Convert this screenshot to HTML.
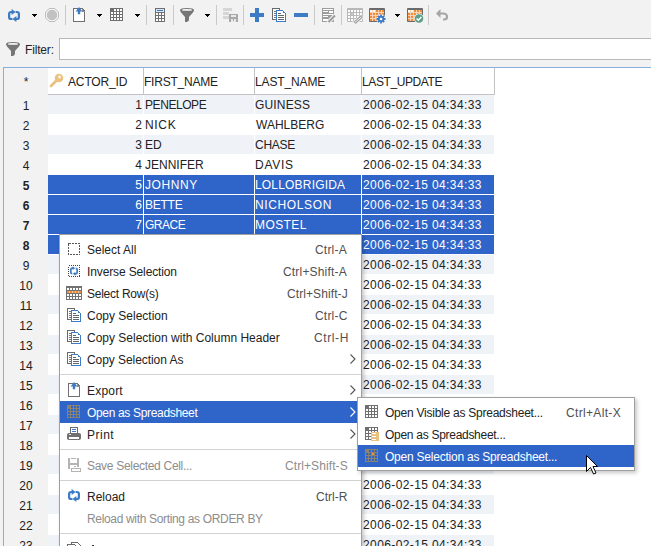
<!DOCTYPE html><html><head><meta charset="utf-8"><style>
*{margin:0;padding:0;box-sizing:border-box}
html,body{width:651px;height:546px;overflow:hidden}
body{position:relative;background:#f2f2f2;font-family:"Liberation Sans",sans-serif;font-size:12px;color:#222}
.a{position:absolute}
.t{position:absolute;white-space:nowrap}
.sep{position:absolute;top:5px;width:1px;height:20px;background:#c9c9c9}
.dd{position:absolute;top:14px;width:0;height:0;border-left:3px solid transparent;border-right:3px solid transparent;border-top:3px solid #000}
.ms{position:absolute;height:1px;background:#d2d2d2}
</style></head><body>
<div class="sep" style="left:65px"></div>
<div class="sep" style="left:146px"></div>
<div class="sep" style="left:173px"></div>
<div class="sep" style="left:216px"></div>
<div class="sep" style="left:243px"></div>
<div class="sep" style="left:314px"></div>
<div class="sep" style="left:341px"></div>
<div class="sep" style="left:428px"></div>
<svg class="a" style="left:32px;top:14px" width="5" height="3" viewBox="0 0 5 3" shape-rendering="crispEdges"><rect x="0" y="0" width="5" height="1" fill="#000"/><rect x="1" y="1" width="3" height="1" fill="#000"/><rect x="2" y="2" width="1" height="1" fill="#000"/></svg>
<svg class="a" style="left:97px;top:14px" width="5" height="3" viewBox="0 0 5 3" shape-rendering="crispEdges"><rect x="0" y="0" width="5" height="1" fill="#000"/><rect x="1" y="1" width="3" height="1" fill="#000"/><rect x="2" y="2" width="1" height="1" fill="#000"/></svg>
<svg class="a" style="left:135px;top:14px" width="5" height="3" viewBox="0 0 5 3" shape-rendering="crispEdges"><rect x="0" y="0" width="5" height="1" fill="#000"/><rect x="1" y="1" width="3" height="1" fill="#000"/><rect x="2" y="2" width="1" height="1" fill="#000"/></svg>
<svg class="a" style="left:205px;top:14px" width="5" height="3" viewBox="0 0 5 3" shape-rendering="crispEdges"><rect x="0" y="0" width="5" height="1" fill="#000"/><rect x="1" y="1" width="3" height="1" fill="#000"/><rect x="2" y="2" width="1" height="1" fill="#000"/></svg>
<svg class="a" style="left:395px;top:14px" width="5" height="3" viewBox="0 0 5 3" shape-rendering="crispEdges"><rect x="0" y="0" width="5" height="1" fill="#000"/><rect x="1" y="1" width="3" height="1" fill="#000"/><rect x="2" y="2" width="1" height="1" fill="#000"/></svg>
<svg class="a" style="left:8px;top:9px" width="12" height="13" viewBox="0 0 12 13" ><path d="M4.5 3 H3.2 Q1.1 3 1.1 5.1 V7.9 Q1.1 10 3.2 10 H4.4" fill="none" stroke="#3d7cc4" stroke-width="2.2"/><path d="M3.6 0 L7.6 3 L3.6 6 Z" fill="#3d7cc4"/><path d="M7.5 10 H8.8 Q10.9 10 10.9 7.9 V5.1 Q10.9 3 8.8 3 H7.6" fill="none" stroke="#3d7cc4" stroke-width="2.2"/><path d="M8.4 7 L4.4 10 L8.4 13 Z" fill="#3d7cc4"/></svg>
<svg class="a" style="left:45px;top:8px" width="14" height="14" viewBox="0 0 14 14" ><path d="M4.2 0.5 H9.8 L13.5 4.2 V9.8 L9.8 13.5 H4.2 L0.5 9.8 V4.2 Z" fill="none" stroke="#bcbcbc" stroke-width="1"/><path d="M4.9 2 H9.1 L12 4.9 V9.1 L9.1 12 H4.9 L2 9.1 V4.9 Z" fill="#c2c2c2"/></svg>
<svg class="a" style="left:73px;top:7px" width="12" height="15" viewBox="0 0 12 15" ><path d="M0.5 1.5 H9 L11.5 4 V14.5 H0.5 Z" fill="#fff" stroke="#707070" stroke-width="1" shape-rendering="crispEdges"/><path d="M9 1.5 V4 H11.5" fill="none" stroke="#909090" stroke-width="1" shape-rendering="crispEdges"/><path d="M2.6 4.6 L6 0 L9.4 4.6 H7.2 V7.2 H4.8 V4.6 Z" fill="#3d7cc4"/></svg>
<svg class="a" style="left:110px;top:8px" width="13" height="13" viewBox="0 0 13 13" shape-rendering="crispEdges"><rect x="0" y="0" width="13" height="13" fill="#6f6f6f"/><rect x="4" y="1" width="2" height="2" fill="#fff"/><rect x="7" y="1" width="2" height="2" fill="#fff"/><rect x="10" y="1" width="2" height="2" fill="#fff"/><rect x="1" y="4" width="2" height="2" fill="#fff"/><rect x="4" y="4" width="2" height="2" fill="#fff"/><rect x="7" y="4" width="2" height="2" fill="#fff"/><rect x="10" y="4" width="2" height="2" fill="#fff"/><rect x="1" y="7" width="2" height="2" fill="#fff"/><rect x="4" y="7" width="2" height="2" fill="#fff"/><rect x="7" y="7" width="2" height="2" fill="#fff"/><rect x="10" y="7" width="2" height="2" fill="#fff"/><rect x="1" y="10" width="2" height="2" fill="#fff"/><rect x="4" y="10" width="2" height="2" fill="#fff"/><rect x="7" y="10" width="2" height="2" fill="#fff"/><rect x="10" y="10" width="2" height="2" fill="#fff"/></svg>
<svg class="a" style="left:155px;top:8px" width="10" height="14" viewBox="0 0 10 14" shape-rendering="crispEdges"><rect x="0" y="0" width="10" height="14" rx="1" fill="#707070"/><rect x="1" y="1" width="8" height="3" fill="#d8e6f5"/><rect x="2" y="2" width="6" height="1" fill="#3d7cc4"/><rect x="1" y="5" width="2" height="2" fill="#fff"/><rect x="4" y="5" width="2" height="2" fill="#fff"/><rect x="7" y="5" width="2" height="2" fill="#fff"/><rect x="1" y="8" width="2" height="2" fill="#fff"/><rect x="4" y="8" width="2" height="2" fill="#fff"/><rect x="7" y="8" width="2" height="2" fill="#fff"/><rect x="1" y="11" width="2" height="2" fill="#fff"/><rect x="4" y="11" width="2" height="2" fill="#fff"/><rect x="7" y="11" width="2" height="2" fill="#fff"/></svg>
<svg class="a" style="left:180px;top:8px" width="14" height="14" viewBox="0 0 14 14" ><path d="M0 2.2 Q0 0 7 0 Q14 0 14 2.2 Q14 3.6 9 9 V11.5 Q9 13.6 6.5 14 H5 V9 Q0 3.6 0 2.2 Z" fill="#767676"/><ellipse cx="7" cy="1.9" rx="5" ry="0.9" fill="#fafafa"/></svg>
<svg class="a" style="left:223px;top:8px" width="15" height="14" viewBox="0 0 15 14" shape-rendering="crispEdges"><rect x="0" y="0" width="9" height="3" rx="1" fill="#d6d6d6"/><rect x="0" y="4" width="6" height="3" rx="1" fill="#d6d6d6"/><rect x="0" y="8" width="6" height="3" rx="1" fill="#d6d6d6"/><path d="M6 6 H15 V14 H6 Z" fill="#a9a9a9"/><rect x="8" y="7" width="5" height="2" fill="#e8e8e8"/><rect x="8" y="11" width="5" height="3" fill="#e8e8e8"/><rect x="10" y="11" width="1" height="2" fill="#a9a9a9"/></svg>
<svg class="a" style="left:250px;top:8px" width="14" height="14" viewBox="0 0 14 14" shape-rendering="crispEdges"><rect x="5" y="0" width="4" height="14" fill="#3d7cc4"/><rect x="0" y="5" width="14" height="4" fill="#3d7cc4"/></svg>
<svg class="a" style="left:272px;top:8px" width="15" height="14" viewBox="0 0 15 14" shape-rendering="crispEdges"><path d="M0.5 0.5 H7.5 V11.5 H0.5 Z" fill="#fff" stroke="#6a6a6a" stroke-width="1"/><rect x="2" y="3" width="2" height="1" fill="#777"/><rect x="2" y="5" width="2" height="1" fill="#777"/><rect x="2" y="7" width="2" height="1" fill="#777"/><rect x="2" y="9" width="2" height="1" fill="#777"/><path d="M4.5 2.5 H10.5 L13.5 5.5 V13.5 H4.5 Z" fill="#fff" stroke="#3d7cc4" stroke-width="1"/><rect x="11" y="3" width="1" height="2" fill="#3d7cc4"/><rect x="6" y="5" width="3" height="1" fill="#666"/><rect x="6" y="7" width="6" height="1" fill="#666"/><rect x="6" y="9" width="6" height="1" fill="#666"/><rect x="6" y="11" width="6" height="1" fill="#666"/></svg>
<svg class="a" style="left:294px;top:13px" width="14" height="4" viewBox="0 0 14 4" shape-rendering="crispEdges"><rect x="0" y="0" width="14" height="4" fill="#3d7cc4"/></svg>
<svg class="a" style="left:322px;top:8px" width="15" height="15" viewBox="0 0 15 15" ><rect x="0" y="0" width="12" height="14" fill="#9c9c9c"/><rect x="1" y="1" width="10" height="1" fill="#fff"/><rect x="1" y="3" width="5" height="1" fill="#fff"/><rect x="7" y="3" width="4" height="2" fill="#fff"/><rect x="1" y="6" width="10" height="1" fill="#fff"/><rect x="1" y="8" width="5" height="1" fill="#fff"/><rect x="1" y="11" width="5" height="2" fill="#fff"/><path d="M6 14.5 L13 7.5" stroke="#f2f2f2" stroke-width="4"/><path d="M6.5 14 L13 7.5" stroke="#9c9c9c" stroke-width="2"/></svg>
<svg class="a" style="left:347px;top:8px" width="17" height="16" viewBox="0 0 17 16" ><rect x="0" y="0" width="16" height="14" rx="1" fill="#b8b8b8"/><rect x="1" y="2" width="14" height="11" fill="#b8b8b8"/><rect x="1" y="2" width="2" height="2" fill="#fff"/><rect x="4" y="2" width="2" height="2" fill="#fff"/><rect x="7" y="2" width="2" height="2" fill="#fff"/><rect x="10" y="2" width="2" height="2" fill="#fff"/><rect x="13" y="2" width="2" height="2" fill="#fff"/><rect x="1" y="5" width="2" height="2" fill="#fff"/><rect x="4" y="5" width="2" height="2" fill="#fff"/><rect x="7" y="5" width="2" height="2" fill="#fff"/><rect x="10" y="5" width="2" height="2" fill="#fff"/><rect x="13" y="5" width="2" height="2" fill="#fff"/><rect x="1" y="8" width="2" height="2" fill="#fff"/><rect x="4" y="8" width="2" height="2" fill="#fff"/><rect x="7" y="8" width="2" height="2" fill="#fff"/><rect x="10" y="8" width="2" height="2" fill="#fff"/><rect x="13" y="8" width="2" height="2" fill="#fff"/><rect x="1" y="11" width="2" height="2" fill="#fff"/><rect x="4" y="11" width="2" height="2" fill="#fff"/><rect x="7" y="11" width="2" height="2" fill="#fff"/><rect x="10" y="11" width="2" height="2" fill="#fff"/><rect x="13" y="11" width="2" height="2" fill="#fff"/><rect x="4" y="5" width="2" height="2" fill="#c8c8c8"/><path d="M7 15.5 L15.5 8" stroke="#f2f2f2" stroke-width="4.5"/><path d="M7.6 14.8 L15 8.2" stroke="#a0a0a0" stroke-width="3"/><path d="M8.2 14.2 L14.4 8.8" stroke="#f4f4f4" stroke-width="1"/></svg>
<svg class="a" style="left:369px;top:8px" width="17" height="16" viewBox="0 0 17 16" ><rect x="0" y="0" width="16" height="14" rx="1" fill="#6a6a6a"/><rect x="1" y="2" width="14" height="11" fill="#f6d3b5"/><rect x="1" y="2" width="2" height="2" fill="#fff"/><rect x="4" y="2" width="2" height="2" fill="#fff"/><rect x="7" y="2" width="2" height="2" fill="#f08c3a"/><rect x="10" y="2" width="2" height="2" fill="#f08c3a"/><rect x="13" y="2" width="2" height="2" fill="#f08c3a"/><rect x="1" y="5" width="2" height="2" fill="#f08c3a"/><rect x="4" y="5" width="2" height="2" fill="#f08c3a"/><rect x="7" y="5" width="2" height="2" fill="#f08c3a"/><rect x="10" y="5" width="2" height="2" fill="#f08c3a"/><rect x="13" y="5" width="2" height="2" fill="#f08c3a"/><rect x="1" y="8" width="2" height="2" fill="#f08c3a"/><rect x="4" y="8" width="2" height="2" fill="#f08c3a"/><rect x="7" y="8" width="2" height="2" fill="#f08c3a"/><rect x="10" y="8" width="2" height="2" fill="#f08c3a"/><rect x="13" y="8" width="2" height="2" fill="#f08c3a"/><rect x="1" y="11" width="2" height="2" fill="#f08c3a"/><rect x="4" y="11" width="2" height="2" fill="#f08c3a"/><rect x="7" y="11" width="2" height="2" fill="#f08c3a"/><rect x="10" y="11" width="2" height="2" fill="#f08c3a"/><rect x="13" y="11" width="2" height="2" fill="#f08c3a"/><circle cx="12" cy="11" r="4.8" fill="#f2f2f2"/><path d="M12 6.5 V15.5 M7.5 11 H16.5 M8.8 7.8 L15.2 14.2 M15.2 7.8 L8.8 14.2" stroke="#3d7cc4" stroke-width="1.8"/><circle cx="12" cy="11" r="3.2" fill="#3d7cc4"/><circle cx="12" cy="11" r="1.3" fill="#fff"/></svg>
<svg class="a" style="left:407px;top:8px" width="17" height="16" viewBox="0 0 17 16" ><rect x="0" y="0" width="16" height="14" rx="1" fill="#6a6a6a"/><rect x="1" y="2" width="14" height="11" fill="#f6d3b5"/><rect x="1" y="2" width="2" height="2" fill="#fff"/><rect x="4" y="2" width="2" height="2" fill="#fff"/><rect x="7" y="2" width="2" height="2" fill="#f08c3a"/><rect x="10" y="2" width="2" height="2" fill="#f08c3a"/><rect x="13" y="2" width="2" height="2" fill="#f08c3a"/><rect x="1" y="5" width="2" height="2" fill="#f08c3a"/><rect x="4" y="5" width="2" height="2" fill="#f08c3a"/><rect x="7" y="5" width="2" height="2" fill="#f08c3a"/><rect x="10" y="5" width="2" height="2" fill="#f08c3a"/><rect x="13" y="5" width="2" height="2" fill="#f08c3a"/><rect x="1" y="8" width="2" height="2" fill="#f08c3a"/><rect x="4" y="8" width="2" height="2" fill="#f08c3a"/><rect x="7" y="8" width="2" height="2" fill="#f08c3a"/><rect x="10" y="8" width="2" height="2" fill="#f08c3a"/><rect x="13" y="8" width="2" height="2" fill="#f08c3a"/><rect x="1" y="11" width="2" height="2" fill="#f08c3a"/><rect x="4" y="11" width="2" height="2" fill="#f08c3a"/><rect x="7" y="11" width="2" height="2" fill="#f08c3a"/><rect x="10" y="11" width="2" height="2" fill="#f08c3a"/><rect x="13" y="11" width="2" height="2" fill="#f08c3a"/><circle cx="12" cy="10.5" r="5" fill="#f2f2f2"/><circle cx="12" cy="10.5" r="4.3" fill="#5d9f86"/><path d="M9.6 10.5 L11.3 12.2 L14.4 9" fill="none" stroke="#fff" stroke-width="1.5"/></svg>
<svg class="a" style="left:436px;top:9px" width="13" height="12" viewBox="0 0 13 12" ><path d="M2 4.5 H7 Q11 4.5 11 8 Q11 10.5 8 10.5 H7" fill="none" stroke="#a6a6a6" stroke-width="2.2"/><path d="M0 4.5 L4.5 0 V9 Z" fill="#a6a6a6"/></svg>
<svg class="a" style="left:6px;top:42px" width="14" height="14" viewBox="0 0 14 14" ><path d="M0 2.2 Q0 0 7 0 Q14 0 14 2.2 Q14 3.6 9 9 V11.5 Q9 13.6 6.5 14 H5 V9 Q0 3.6 0 2.2 Z" fill="#767676"/><ellipse cx="7" cy="1.9" rx="5" ry="0.9" fill="#fafafa"/></svg>
<div class="t" id="filter" style="left:25px;top:41px;height:19px;line-height:19px;color:#222;letter-spacing:-0.167px;">Filter:</div>
<div class="a" style="left:59px;top:38px;width:700px;height:22px;background:#fff;border:1px solid #b9b9b9"></div>
<div class="a" style="left:3px;top:67px;width:700px;height:500px;background:#fff;border-left:1px solid #86aee0;border-top:1px solid #86aee0"></div>
<div class="a" style="left:4px;top:68px;width:44px;height:500px;background:#f2f2f2"></div>
<div class="a" style="left:48px;top:94px;width:447px;height:1px;background:#c3c3c3"></div>
<div class="a" style="left:143px;top:68px;width:1px;height:27px;background:#c3c3c3"></div>
<div class="a" style="left:254px;top:68px;width:1px;height:27px;background:#c3c3c3"></div>
<div class="a" style="left:361px;top:68px;width:1px;height:27px;background:#c3c3c3"></div>
<div class="a" style="left:494px;top:68px;width:1px;height:27px;background:#c3c3c3"></div>
<div class="t" id="star" style="left:4px;top:73px;height:19px;line-height:19px;color:#222;letter-spacing:0.000px;width:44px;text-align:center">*</div>
<div class="t" id="hid" style="left:68px;top:73px;height:19px;line-height:19px;color:#222;letter-spacing:-0.143px;">ACTOR_ID</div>
<div class="t" id="hfn" style="left:144px;top:73px;height:19px;line-height:19px;color:#222;letter-spacing:-0.222px;">FIRST_NAME</div>
<div class="t" id="hln" style="left:255px;top:73px;height:19px;line-height:19px;color:#222;letter-spacing:-0.125px;">LAST_NAME</div>
<div class="t" id="hlu" style="left:362px;top:73px;height:19px;line-height:19px;color:#222;letter-spacing:-0.400px;">LAST_UPDATE</div>
<svg class="a" style="left:49px;top:73px" width="15" height="15" viewBox="0 0 15 15"><circle cx="10" cy="5" r="4.3" fill="#eac381"/><circle cx="10.6" cy="4" r="1.4" fill="#fff6e4"/><path d="M7.5 7.5 L2 13" stroke="#eac381" stroke-width="2.8" stroke-linecap="round"/></svg>
<div class="a" style="left:48px;top:95px;width:95px;height:19px;background:#eff3f8"></div>
<div class="a" style="left:144px;top:95px;width:110px;height:19px;background:#eff3f8"></div>
<div class="a" style="left:255px;top:95px;width:106px;height:19px;background:#eff3f8"></div>
<div class="a" style="left:362px;top:95px;width:132px;height:19px;background:#eff3f8"></div>
<div class="t" id="rh1" style="left:4px;top:97px;height:19px;line-height:19px;color:#222;letter-spacing:0.000px;width:44px;text-align:center;font-weight:normal">1</div>
<div class="t" id="id1" style="left:48px;top:96px;height:19px;line-height:19px;color:#222;letter-spacing:0.000px;width:94px;text-align:right">1</div>
<div class="t" id="fn1" style="left:145px;top:96px;height:19px;line-height:19px;color:#222;letter-spacing:-0.429px;">PENELOPE</div>
<div class="t" id="ln1" style="left:255px;top:96px;height:19px;line-height:19px;color:#222;letter-spacing:0.166px;">GUINESS</div>
<div class="t" id="dt1" style="left:363px;top:96px;height:19px;line-height:19px;color:#222;letter-spacing:0.389px;">2006-02-15 04:34:33</div>
<div class="t" id="rh2" style="left:4px;top:117px;height:19px;line-height:19px;color:#222;letter-spacing:0.000px;width:44px;text-align:center;font-weight:normal">2</div>
<div class="t" id="id2" style="left:48px;top:116px;height:19px;line-height:19px;color:#222;letter-spacing:0.000px;width:94px;text-align:right">2</div>
<div class="t" id="fn2" style="left:145px;top:116px;height:19px;line-height:19px;color:#222;letter-spacing:0.666px;">NICK</div>
<div class="t" id="ln2" style="left:256px;top:116px;height:19px;line-height:19px;color:#222;letter-spacing:0.000px;">WAHLBERG</div>
<div class="t" style="left:363px;top:116px;height:19px;line-height:19px;color:#222;letter-spacing:0.389px">2006-02-15 04:34:33</div>
<div class="a" style="left:48px;top:135px;width:95px;height:19px;background:#eff3f8"></div>
<div class="a" style="left:144px;top:135px;width:110px;height:19px;background:#eff3f8"></div>
<div class="a" style="left:255px;top:135px;width:106px;height:19px;background:#eff3f8"></div>
<div class="a" style="left:362px;top:135px;width:132px;height:19px;background:#eff3f8"></div>
<div class="t" id="rh3" style="left:4px;top:137px;height:19px;line-height:19px;color:#222;letter-spacing:0.000px;width:44px;text-align:center;font-weight:normal">3</div>
<div class="t" id="id3" style="left:48px;top:136px;height:19px;line-height:19px;color:#222;letter-spacing:0.000px;width:94px;text-align:right">3</div>
<div class="t" id="fn3" style="left:145px;top:136px;height:19px;line-height:19px;color:#222;letter-spacing:0.000px;">ED</div>
<div class="t" id="ln3" style="left:255px;top:136px;height:19px;line-height:19px;color:#222;letter-spacing:-0.250px;">CHASE</div>
<div class="t" style="left:363px;top:136px;height:19px;line-height:19px;color:#222;letter-spacing:0.389px">2006-02-15 04:34:33</div>
<div class="t" id="rh4" style="left:4px;top:157px;height:19px;line-height:19px;color:#222;letter-spacing:0.000px;width:44px;text-align:center;font-weight:normal">4</div>
<div class="t" id="id4" style="left:48px;top:156px;height:19px;line-height:19px;color:#222;letter-spacing:0.000px;width:94px;text-align:right">4</div>
<div class="t" id="fn4" style="left:145px;top:156px;height:19px;line-height:19px;color:#222;letter-spacing:0.000px;">JENNIFER</div>
<div class="t" id="ln4" style="left:255px;top:156px;height:19px;line-height:19px;color:#222;letter-spacing:0.750px;">DAVIS</div>
<div class="t" style="left:363px;top:156px;height:19px;line-height:19px;color:#222;letter-spacing:0.389px">2006-02-15 04:34:33</div>
<div class="a" style="left:48px;top:175px;width:95px;height:19px;background:#2f64c8"></div>
<div class="a" style="left:144px;top:175px;width:110px;height:19px;background:#2f64c8"></div>
<div class="a" style="left:255px;top:175px;width:106px;height:19px;background:#2f64c8"></div>
<div class="a" style="left:362px;top:175px;width:132px;height:19px;background:#2f64c8"></div>
<div class="t" id="rh5" style="left:4px;top:177px;height:19px;line-height:19px;color:#222;letter-spacing:0.000px;width:44px;text-align:center;font-weight:bold">5</div>
<div class="t" id="id5" style="left:48px;top:176px;height:19px;line-height:19px;color:#fff;letter-spacing:0.000px;width:94px;text-align:right">5</div>
<div class="t" id="fn5" style="left:145px;top:176px;height:19px;line-height:19px;color:#fff;letter-spacing:0.600px;">JOHNNY</div>
<div class="t" id="ln5" style="left:255px;top:176px;height:19px;line-height:19px;color:#fff;letter-spacing:0.182px;">LOLLOBRIGIDA</div>
<div class="t" style="left:363px;top:176px;height:19px;line-height:19px;color:#fff;letter-spacing:0.389px">2006-02-15 04:34:33</div>
<div class="a" style="left:48px;top:195px;width:95px;height:19px;background:#2f64c8"></div>
<div class="a" style="left:144px;top:195px;width:110px;height:19px;background:#2f64c8"></div>
<div class="a" style="left:255px;top:195px;width:106px;height:19px;background:#2f64c8"></div>
<div class="a" style="left:362px;top:195px;width:132px;height:19px;background:#2f64c8"></div>
<div class="t" id="rh6" style="left:4px;top:197px;height:19px;line-height:19px;color:#222;letter-spacing:0.000px;width:44px;text-align:center;font-weight:bold">6</div>
<div class="t" id="id6" style="left:48px;top:196px;height:19px;line-height:19px;color:#fff;letter-spacing:0.000px;width:94px;text-align:right">6</div>
<div class="t" id="fn6" style="left:145px;top:196px;height:19px;line-height:19px;color:#fff;letter-spacing:-0.250px;">BETTE</div>
<div class="t" id="ln6" style="left:255px;top:196px;height:19px;line-height:19px;color:#fff;letter-spacing:0.625px;">NICHOLSON</div>
<div class="t" style="left:363px;top:196px;height:19px;line-height:19px;color:#fff;letter-spacing:0.389px">2006-02-15 04:34:33</div>
<div class="a" style="left:48px;top:215px;width:95px;height:19px;background:#2f64c8"></div>
<div class="a" style="left:144px;top:215px;width:110px;height:19px;background:#2f64c8"></div>
<div class="a" style="left:255px;top:215px;width:106px;height:19px;background:#2f64c8"></div>
<div class="a" style="left:362px;top:215px;width:132px;height:19px;background:#2f64c8"></div>
<div class="t" id="rh7" style="left:4px;top:217px;height:19px;line-height:19px;color:#222;letter-spacing:0.000px;width:44px;text-align:center;font-weight:bold">7</div>
<div class="t" id="id7" style="left:48px;top:216px;height:19px;line-height:19px;color:#fff;letter-spacing:0.000px;width:94px;text-align:right">7</div>
<div class="t" id="fn7" style="left:145px;top:216px;height:19px;line-height:19px;color:#fff;letter-spacing:-0.500px;">GRACE</div>
<div class="t" id="ln7" style="left:255px;top:216px;height:19px;line-height:19px;color:#fff;letter-spacing:0.400px;">MOSTEL</div>
<div class="t" style="left:363px;top:216px;height:19px;line-height:19px;color:#fff;letter-spacing:0.389px">2006-02-15 04:34:33</div>
<div class="a" style="left:48px;top:235px;width:95px;height:19px;background:#2f64c8"></div>
<div class="a" style="left:144px;top:235px;width:110px;height:19px;background:#2f64c8"></div>
<div class="a" style="left:255px;top:235px;width:106px;height:19px;background:#2f64c8"></div>
<div class="a" style="left:362px;top:235px;width:132px;height:19px;background:#2f64c8"></div>
<div class="t" id="rh8" style="left:4px;top:237px;height:19px;line-height:19px;color:#222;letter-spacing:0.000px;width:44px;text-align:center;font-weight:bold">8</div>
<div class="t" style="left:363px;top:236px;height:19px;line-height:19px;color:#fff;letter-spacing:0.389px">2006-02-15 04:34:33</div>
<div class="a" style="left:48px;top:255px;width:95px;height:19px;background:#eff3f8"></div>
<div class="a" style="left:144px;top:255px;width:110px;height:19px;background:#eff3f8"></div>
<div class="a" style="left:255px;top:255px;width:106px;height:19px;background:#eff3f8"></div>
<div class="a" style="left:362px;top:255px;width:132px;height:19px;background:#eff3f8"></div>
<div class="t" id="rh9" style="left:4px;top:257px;height:19px;line-height:19px;color:#222;letter-spacing:0.000px;width:44px;text-align:center;font-weight:normal">9</div>
<div class="t" style="left:363px;top:256px;height:19px;line-height:19px;color:#222;letter-spacing:0.389px">2006-02-15 04:34:33</div>
<div class="t" id="rh10" style="left:4px;top:277px;height:19px;line-height:19px;color:#222;letter-spacing:0.000px;width:44px;text-align:center;font-weight:normal">10</div>
<div class="t" style="left:363px;top:276px;height:19px;line-height:19px;color:#222;letter-spacing:0.389px">2006-02-15 04:34:33</div>
<div class="a" style="left:48px;top:295px;width:95px;height:19px;background:#eff3f8"></div>
<div class="a" style="left:144px;top:295px;width:110px;height:19px;background:#eff3f8"></div>
<div class="a" style="left:255px;top:295px;width:106px;height:19px;background:#eff3f8"></div>
<div class="a" style="left:362px;top:295px;width:132px;height:19px;background:#eff3f8"></div>
<div class="t" id="rh11" style="left:4px;top:297px;height:19px;line-height:19px;color:#222;letter-spacing:0.000px;width:44px;text-align:center;font-weight:normal">11</div>
<div class="t" style="left:363px;top:296px;height:19px;line-height:19px;color:#222;letter-spacing:0.389px">2006-02-15 04:34:33</div>
<div class="t" id="rh12" style="left:4px;top:317px;height:19px;line-height:19px;color:#222;letter-spacing:0.000px;width:44px;text-align:center;font-weight:normal">12</div>
<div class="t" style="left:363px;top:316px;height:19px;line-height:19px;color:#222;letter-spacing:0.389px">2006-02-15 04:34:33</div>
<div class="a" style="left:48px;top:335px;width:95px;height:19px;background:#eff3f8"></div>
<div class="a" style="left:144px;top:335px;width:110px;height:19px;background:#eff3f8"></div>
<div class="a" style="left:255px;top:335px;width:106px;height:19px;background:#eff3f8"></div>
<div class="a" style="left:362px;top:335px;width:132px;height:19px;background:#eff3f8"></div>
<div class="t" id="rh13" style="left:4px;top:337px;height:19px;line-height:19px;color:#222;letter-spacing:0.000px;width:44px;text-align:center;font-weight:normal">13</div>
<div class="t" style="left:363px;top:336px;height:19px;line-height:19px;color:#222;letter-spacing:0.389px">2006-02-15 04:34:33</div>
<div class="t" id="rh14" style="left:4px;top:357px;height:19px;line-height:19px;color:#222;letter-spacing:0.000px;width:44px;text-align:center;font-weight:normal">14</div>
<div class="t" style="left:363px;top:356px;height:19px;line-height:19px;color:#222;letter-spacing:0.389px">2006-02-15 04:34:33</div>
<div class="a" style="left:48px;top:375px;width:95px;height:19px;background:#eff3f8"></div>
<div class="a" style="left:144px;top:375px;width:110px;height:19px;background:#eff3f8"></div>
<div class="a" style="left:255px;top:375px;width:106px;height:19px;background:#eff3f8"></div>
<div class="a" style="left:362px;top:375px;width:132px;height:19px;background:#eff3f8"></div>
<div class="t" id="rh15" style="left:4px;top:377px;height:19px;line-height:19px;color:#222;letter-spacing:0.000px;width:44px;text-align:center;font-weight:normal">15</div>
<div class="t" style="left:363px;top:376px;height:19px;line-height:19px;color:#222;letter-spacing:0.389px">2006-02-15 04:34:33</div>
<div class="t" id="rh16" style="left:4px;top:397px;height:19px;line-height:19px;color:#222;letter-spacing:0.000px;width:44px;text-align:center;font-weight:normal">16</div>
<div class="t" style="left:363px;top:396px;height:19px;line-height:19px;color:#222;letter-spacing:0.389px">2006-02-15 04:34:33</div>
<div class="a" style="left:48px;top:415px;width:95px;height:19px;background:#eff3f8"></div>
<div class="a" style="left:144px;top:415px;width:110px;height:19px;background:#eff3f8"></div>
<div class="a" style="left:255px;top:415px;width:106px;height:19px;background:#eff3f8"></div>
<div class="a" style="left:362px;top:415px;width:132px;height:19px;background:#eff3f8"></div>
<div class="t" id="rh17" style="left:4px;top:417px;height:19px;line-height:19px;color:#222;letter-spacing:0.000px;width:44px;text-align:center;font-weight:normal">17</div>
<div class="t" style="left:363px;top:416px;height:19px;line-height:19px;color:#222;letter-spacing:0.389px">2006-02-15 04:34:33</div>
<div class="t" id="rh18" style="left:4px;top:437px;height:19px;line-height:19px;color:#222;letter-spacing:0.000px;width:44px;text-align:center;font-weight:normal">18</div>
<div class="t" style="left:363px;top:436px;height:19px;line-height:19px;color:#222;letter-spacing:0.389px">2006-02-15 04:34:33</div>
<div class="a" style="left:48px;top:455px;width:95px;height:19px;background:#eff3f8"></div>
<div class="a" style="left:144px;top:455px;width:110px;height:19px;background:#eff3f8"></div>
<div class="a" style="left:255px;top:455px;width:106px;height:19px;background:#eff3f8"></div>
<div class="a" style="left:362px;top:455px;width:132px;height:19px;background:#eff3f8"></div>
<div class="t" id="rh19" style="left:4px;top:457px;height:19px;line-height:19px;color:#222;letter-spacing:0.000px;width:44px;text-align:center;font-weight:normal">19</div>
<div class="t" style="left:363px;top:456px;height:19px;line-height:19px;color:#222;letter-spacing:0.389px">2006-02-15 04:34:33</div>
<div class="t" id="rh20" style="left:4px;top:477px;height:19px;line-height:19px;color:#222;letter-spacing:0.000px;width:44px;text-align:center;font-weight:normal">20</div>
<div class="t" style="left:363px;top:476px;height:19px;line-height:19px;color:#222;letter-spacing:0.389px">2006-02-15 04:34:33</div>
<div class="a" style="left:48px;top:495px;width:95px;height:19px;background:#eff3f8"></div>
<div class="a" style="left:144px;top:495px;width:110px;height:19px;background:#eff3f8"></div>
<div class="a" style="left:255px;top:495px;width:106px;height:19px;background:#eff3f8"></div>
<div class="a" style="left:362px;top:495px;width:132px;height:19px;background:#eff3f8"></div>
<div class="t" id="rh21" style="left:4px;top:497px;height:19px;line-height:19px;color:#222;letter-spacing:0.000px;width:44px;text-align:center;font-weight:normal">21</div>
<div class="t" style="left:363px;top:496px;height:19px;line-height:19px;color:#222;letter-spacing:0.389px">2006-02-15 04:34:33</div>
<div class="t" id="rh22" style="left:4px;top:517px;height:19px;line-height:19px;color:#222;letter-spacing:0.000px;width:44px;text-align:center;font-weight:normal">22</div>
<div class="t" style="left:363px;top:516px;height:19px;line-height:19px;color:#222;letter-spacing:0.389px">2006-02-15 04:34:33</div>
<div class="a" style="left:48px;top:535px;width:95px;height:19px;background:#eff3f8"></div>
<div class="a" style="left:144px;top:535px;width:110px;height:19px;background:#eff3f8"></div>
<div class="a" style="left:255px;top:535px;width:106px;height:19px;background:#eff3f8"></div>
<div class="a" style="left:362px;top:535px;width:132px;height:19px;background:#eff3f8"></div>
<div class="t" id="rh23" style="left:4px;top:537px;height:19px;line-height:19px;color:#222;letter-spacing:0.000px;width:44px;text-align:center;font-weight:normal">23</div>
<div class="t" style="left:363px;top:536px;height:19px;line-height:19px;color:#222;letter-spacing:0.389px">2006-02-15 04:34:33</div>
<div class="a" style="left:59px;top:234px;width:303px;height:330px;background:#fff;border:1px solid #a0a0a0;box-shadow:2px 2px 4px rgba(0,0,0,0.22)"></div>
<div class="t" id="m1" style="left:87px;top:239px;height:22px;line-height:22px;color:#222;letter-spacing:0.000px;">Select All</div>
<div class="t" id="s1" style="left:315px;top:239px;height:22px;line-height:22px;color:#505050;letter-spacing:0.200px;">Ctrl-A</div>
<div class="t" id="m2" style="left:87px;top:261px;height:22px;line-height:22px;color:#222;letter-spacing:-0.126px;">Inverse Selection</div>
<div class="t" id="s2" style="left:283px;top:261px;height:22px;line-height:22px;color:#505050;letter-spacing:0.182px;">Ctrl+Shift-A</div>
<div class="t" id="m3" style="left:87px;top:283px;height:22px;line-height:22px;color:#222;letter-spacing:-0.250px;">Select Row(s)</div>
<div class="t" id="s3" style="left:287px;top:283px;height:22px;line-height:22px;color:#505050;letter-spacing:0.091px;">Ctrl+Shift-J</div>
<div class="t" id="m4" style="left:87px;top:305px;height:22px;line-height:22px;color:#222;letter-spacing:0.000px;">Copy Selection</div>
<div class="t" id="s4" style="left:315px;top:305px;height:22px;line-height:22px;color:#505050;letter-spacing:0.200px;">Ctrl-C</div>
<div class="t" id="m5" style="left:87px;top:327px;height:22px;line-height:22px;color:#222;letter-spacing:0.000px;">Copy Selection with Column Header</div>
<div class="t" id="s5" style="left:314px;top:327px;height:22px;line-height:22px;color:#505050;letter-spacing:0.600px;">Ctrl-H</div>
<div class="t" id="m6" style="left:87px;top:349px;height:22px;line-height:22px;color:#222;letter-spacing:-0.062px;">Copy Selection As</div>
<svg class="a" style="left:350px;top:354px" width="6" height="10" viewBox="0 0 6 10" ><path d="M0.5 0.5 L5 5 L0.5 9.5" fill="none" stroke="#555" stroke-width="1.1"/></svg>
<div class="ms" style="left:60px;top:374px;width:301px"></div>
<div class="t" id="m7" style="left:87px;top:380px;height:22px;line-height:22px;color:#222;letter-spacing:0.200px;">Export</div>
<svg class="a" style="left:350px;top:385px" width="6" height="10" viewBox="0 0 6 10" ><path d="M0.5 0.5 L5 5 L0.5 9.5" fill="none" stroke="#555" stroke-width="1.1"/></svg>
<div class="a" style="left:60px;top:401px;width:301px;height:22px;background:#2f64c8"></div>
<div class="t" id="m8" style="left:87px;top:402px;height:22px;line-height:22px;color:#fff;letter-spacing:-0.333px;">Open as Spreadsheet</div>
<svg class="a" style="left:350px;top:407px" width="6" height="10" viewBox="0 0 6 10" ><path d="M0.5 0.5 L5 5 L0.5 9.5" fill="none" stroke="#fff" stroke-width="1.1"/></svg>
<div class="t" id="m9" style="left:87px;top:424px;height:22px;line-height:22px;color:#222;letter-spacing:0.500px;">Print</div>
<svg class="a" style="left:350px;top:429px" width="6" height="10" viewBox="0 0 6 10" ><path d="M0.5 0.5 L5 5 L0.5 9.5" fill="none" stroke="#555" stroke-width="1.1"/></svg>
<div class="ms" style="left:60px;top:449px;width:301px"></div>
<div class="t" id="m10" style="left:87px;top:455px;height:22px;line-height:22px;color:#8d8d8d;letter-spacing:-0.300px;">Save Selected Cell...</div>
<div class="t" id="s10" style="left:285px;top:455px;height:22px;line-height:22px;color:#8d8d8d;letter-spacing:0.091px;">Ctrl+Shift-S</div>
<div class="ms" style="left:60px;top:480px;width:301px"></div>
<div class="t" id="m11" style="left:87px;top:486px;height:22px;line-height:22px;color:#222;letter-spacing:0.000px;">Reload</div>
<div class="t" id="s11" style="left:316px;top:486px;height:22px;line-height:22px;color:#505050;letter-spacing:0.000px;">Ctrl-R</div>
<div class="t" id="m12" style="left:87px;top:508px;height:22px;line-height:22px;color:#8d8d8d;letter-spacing:-0.334px;">Reload with Sorting as ORDER BY</div>
<div class="ms" style="left:60px;top:533px;width:301px"></div>
<div class="a" style="left:92px;top:545px;width:2px;height:1px;background:#333"></div>
<svg class="a" style="left:68px;top:243px" width="12" height="12" viewBox="0 0 12 12" shape-rendering="crispEdges"><rect x="0.5" y="0.5" width="11" height="11" fill="none" stroke="#555" stroke-width="1" stroke-dasharray="2 1"/></svg>
<svg class="a" style="left:68px;top:265px" width="12" height="12" viewBox="0 0 12 12" ><rect x="0.5" y="0.5" width="11" height="11" fill="none" stroke="#444" stroke-width="1" stroke-dasharray="1 1" shape-rendering="crispEdges"/><path d="M5.8 3.2 H4.3 Q2.8 3.2 2.8 4.7 V7.2 Q2.8 8.7 4.3 8.7" fill="none" stroke="#3d7cc4" stroke-width="1.7"/><path d="M4.6 1.3 L7.2 3.2 L4.6 5.1 Z" fill="#3d7cc4"/><path d="M6.2 8.8 H7.7 Q9.2 8.8 9.2 7.3 V4.8 Q9.2 3.3 7.7 3.3" fill="none" stroke="#3d7cc4" stroke-width="1.7"/><path d="M7.4 6.9 L4.8 8.8 L7.4 10.7 Z" fill="#3d7cc4"/></svg>
<svg class="a" style="left:66px;top:286px" width="16" height="14" viewBox="0 0 16 14" shape-rendering="crispEdges"><rect x="0" y="0" width="16" height="14" rx="1" fill="#727272"/><rect x="1" y="5" width="14" height="2" fill="#f7c9a0"/><rect x="1" y="2" width="2" height="2" fill="#fff"/><rect x="4" y="2" width="2" height="2" fill="#fff"/><rect x="7" y="2" width="2" height="2" fill="#fff"/><rect x="10" y="2" width="2" height="2" fill="#fff"/><rect x="13" y="2" width="2" height="2" fill="#fff"/><rect x="1" y="5" width="2" height="2" fill="#f08c3a"/><rect x="4" y="5" width="2" height="2" fill="#f08c3a"/><rect x="7" y="5" width="2" height="2" fill="#f08c3a"/><rect x="10" y="5" width="2" height="2" fill="#f08c3a"/><rect x="13" y="5" width="2" height="2" fill="#f08c3a"/><rect x="1" y="8" width="2" height="2" fill="#fff"/><rect x="4" y="8" width="2" height="2" fill="#fff"/><rect x="7" y="8" width="2" height="2" fill="#fff"/><rect x="10" y="8" width="2" height="2" fill="#fff"/><rect x="13" y="8" width="2" height="2" fill="#fff"/><rect x="1" y="11" width="2" height="2" fill="#fff"/><rect x="4" y="11" width="2" height="2" fill="#fff"/><rect x="7" y="11" width="2" height="2" fill="#fff"/><rect x="10" y="11" width="2" height="2" fill="#fff"/><rect x="13" y="11" width="2" height="2" fill="#fff"/></svg>
<svg class="a" style="left:67px;top:308px" width="15" height="14" viewBox="0 0 15 14" shape-rendering="crispEdges"><path d="M0.5 0.5 H7.5 V11.5 H0.5 Z" fill="#fff" stroke="#6a6a6a" stroke-width="1"/><rect x="2" y="3" width="2" height="1" fill="#777"/><rect x="2" y="5" width="2" height="1" fill="#777"/><rect x="2" y="7" width="2" height="1" fill="#777"/><rect x="2" y="9" width="2" height="1" fill="#777"/><path d="M4.5 2.5 H10.5 L13.5 5.5 V13.5 H4.5 Z" fill="#fff" stroke="#3d7cc4" stroke-width="1"/><rect x="11" y="3" width="1" height="2" fill="#3d7cc4"/><rect x="6" y="5" width="3" height="1" fill="#666"/><rect x="6" y="7" width="6" height="1" fill="#666"/><rect x="6" y="9" width="6" height="1" fill="#666"/><rect x="6" y="11" width="6" height="1" fill="#666"/></svg>
<svg class="a" style="left:67px;top:330px" width="15" height="14" viewBox="0 0 15 14" shape-rendering="crispEdges"><path d="M0.5 0.5 H7.5 V11.5 H0.5 Z" fill="#fff" stroke="#6a6a6a" stroke-width="1"/><rect x="2" y="3" width="2" height="1" fill="#777"/><rect x="2" y="5" width="2" height="1" fill="#777"/><rect x="2" y="7" width="2" height="1" fill="#777"/><rect x="2" y="9" width="2" height="1" fill="#777"/><path d="M4.5 2.5 H10.5 L13.5 5.5 V13.5 H4.5 Z" fill="#fff" stroke="#3d7cc4" stroke-width="1"/><rect x="11" y="3" width="1" height="2" fill="#3d7cc4"/><rect x="6" y="5" width="3" height="1" fill="#666"/><rect x="6" y="7" width="6" height="1" fill="#666"/><rect x="6" y="9" width="6" height="1" fill="#666"/><rect x="6" y="11" width="6" height="1" fill="#666"/></svg>
<svg class="a" style="left:67px;top:352px" width="15" height="14" viewBox="0 0 15 14" shape-rendering="crispEdges"><path d="M0.5 0.5 H7.5 V11.5 H0.5 Z" fill="#fff" stroke="#6a6a6a" stroke-width="1"/><rect x="2" y="3" width="2" height="1" fill="#777"/><rect x="2" y="5" width="2" height="1" fill="#777"/><rect x="2" y="7" width="2" height="1" fill="#777"/><rect x="2" y="9" width="2" height="1" fill="#777"/><path d="M4.5 2.5 H10.5 L13.5 5.5 V13.5 H4.5 Z" fill="#fff" stroke="#3d7cc4" stroke-width="1"/><rect x="11" y="3" width="1" height="2" fill="#3d7cc4"/><rect x="6" y="5" width="3" height="1" fill="#666"/><rect x="6" y="7" width="6" height="1" fill="#666"/><rect x="6" y="9" width="6" height="1" fill="#666"/><rect x="6" y="11" width="6" height="1" fill="#666"/></svg>
<svg class="a" style="left:68px;top:382px" width="12" height="15" viewBox="0 0 12 15" ><path d="M0.5 1.5 H9 L11.5 4 V14.5 H0.5 Z" fill="#fff" stroke="#707070" stroke-width="1" shape-rendering="crispEdges"/><path d="M9 1.5 V4 H11.5" fill="none" stroke="#909090" stroke-width="1" shape-rendering="crispEdges"/><path d="M2.6 4.6 L6 0 L9.4 4.6 H7.2 V7.2 H4.8 V4.6 Z" fill="#3d7cc4"/></svg>
<svg class="a" style="left:67px;top:427px" width="14" height="13" viewBox="0 0 14 13" ><rect x="3.5" y="0.5" width="7" height="6" fill="#fff" stroke="#6a6a6a"/><rect x="5" y="2" width="4" height="1" fill="#3d7cc4"/><rect x="5" y="4" width="4" height="1" fill="#3d7cc4"/><rect x="0" y="6" width="14" height="7" rx="2" fill="#707070"/><rect x="2" y="7" width="2" height="1" fill="#e0e0e0"/><rect x="2" y="10" width="10" height="2" fill="#fff"/></svg>
<svg class="a" style="left:68px;top:458px" width="14" height="14" viewBox="0 0 14 14" shape-rendering="crispEdges"><rect x="0" y="0" width="2" height="11" fill="#b4b4b4"/><rect x="9" y="0" width="2" height="9" fill="#b4b4b4"/><rect x="3" y="0" width="5" height="1" fill="#b4b4b4"/><rect x="0" y="5" width="11" height="2" fill="#b4b4b4"/><rect x="6" y="8" width="2" height="1" fill="#b4b4b4"/><rect x="3.5" y="10.5" width="9" height="3" fill="#fff" stroke="#b4b4b4"/></svg>
<svg class="a" style="left:68px;top:489px" width="12" height="13" viewBox="0 0 12 13" ><path d="M4.5 3 H3.2 Q1.1 3 1.1 5.1 V7.9 Q1.1 10 3.2 10 H4.4" fill="none" stroke="#3d7cc4" stroke-width="2.2"/><path d="M3.6 0 L7.6 3 L3.6 6 Z" fill="#3d7cc4"/><path d="M7.5 10 H8.8 Q10.9 10 10.9 7.9 V5.1 Q10.9 3 8.8 3 H7.6" fill="none" stroke="#3d7cc4" stroke-width="2.2"/><path d="M8.4 7 L4.4 10 L8.4 13 Z" fill="#3d7cc4"/></svg>
<svg class="a" style="left:67px;top:542px" width="14" height="12" viewBox="0 0 14 12" ><path d="M4.5 0.5 H10.5 L13.5 3.5 V12 H4.5 Z" fill="#fff" stroke="#6a6a6a" shape-rendering="crispEdges"/><path d="M0.5 2.5 H7.5 L10.5 5.5 V14 H0.5 Z" fill="#fff" stroke="#6a6a6a" shape-rendering="crispEdges"/></svg>
<svg class="a" style="left:67px;top:405px" width="13" height="13" viewBox="0 0 13 13" shape-rendering="crispEdges"><rect x="0" y="0" width="1" height="13" fill="#8c8270"/><rect x="0" y="0" width="13" height="1" fill="#8c8270"/><rect x="3" y="0" width="1" height="13" fill="#8c8270"/><rect x="0" y="3" width="13" height="1" fill="#8c8270"/><rect x="6" y="0" width="1" height="13" fill="#8c8270"/><rect x="0" y="6" width="13" height="1" fill="#8c8270"/><rect x="9" y="0" width="1" height="13" fill="#8c8270"/><rect x="0" y="9" width="13" height="1" fill="#8c8270"/><rect x="12" y="0" width="1" height="13" fill="#8c8270"/><rect x="0" y="12" width="13" height="1" fill="#8c8270"/><rect x="1" y="1" width="2" height="2" fill="#8c8270"/></svg>
<div class="a" style="left:357px;top:397px;width:278px;height:74px;background:#fff;border:1px solid #a0a0a0;box-shadow:2px 2px 4px rgba(0,0,0,0.22)"></div>
<div class="a" style="left:358px;top:445px;width:276px;height:22px;background:#2f64c8"></div>
<div class="t" id="sm1" style="left:385px;top:402px;height:22px;line-height:22px;color:#222;letter-spacing:-0.242px;">Open Visible as Spreadsheet...</div>
<div class="t" id="ss1" style="left:566px;top:402px;height:22px;line-height:22px;color:#505050;letter-spacing:0.333px;">Ctrl+Alt-X</div>
<div class="t" id="sm2" style="left:385px;top:424px;height:22px;line-height:22px;color:#222;letter-spacing:-0.285px;">Open as Spreadsheet...</div>
<div class="t" id="sm3" style="left:385px;top:446px;height:22px;line-height:22px;color:#fff;letter-spacing:-0.226px;">Open Selection as Spreadsheet...</div>
<svg class="a" style="left:365px;top:405px" width="13" height="13" viewBox="0 0 13 13" shape-rendering="crispEdges"><rect x="0" y="0" width="13" height="13" fill="#6f6f6f"/><rect x="4" y="1" width="2" height="2" fill="#fff"/><rect x="7" y="1" width="2" height="2" fill="#fff"/><rect x="10" y="1" width="2" height="2" fill="#fff"/><rect x="1" y="4" width="2" height="2" fill="#fff"/><rect x="4" y="4" width="2" height="2" fill="#fff"/><rect x="7" y="4" width="2" height="2" fill="#fff"/><rect x="10" y="4" width="2" height="2" fill="#fff"/><rect x="1" y="7" width="2" height="2" fill="#fff"/><rect x="4" y="7" width="2" height="2" fill="#fff"/><rect x="7" y="7" width="2" height="2" fill="#fff"/><rect x="10" y="7" width="2" height="2" fill="#fff"/><rect x="1" y="10" width="2" height="2" fill="#fff"/><rect x="4" y="10" width="2" height="2" fill="#fff"/><rect x="7" y="10" width="2" height="2" fill="#fff"/><rect x="10" y="10" width="2" height="2" fill="#fff"/></svg>
<svg class="a" style="left:365px;top:427px" width="15" height="15" viewBox="0 0 15 15" shape-rendering="crispEdges"><svg x="0" y="0" width="13" height="13" viewBox="0 0 13 13" shape-rendering="crispEdges"><rect x="0" y="0" width="13" height="13" fill="#6f6f6f"/><rect x="4" y="1" width="2" height="2" fill="#fff"/><rect x="7" y="1" width="2" height="2" fill="#fff"/><rect x="10" y="1" width="2" height="2" fill="#fff"/><rect x="1" y="4" width="2" height="2" fill="#fff"/><rect x="4" y="4" width="2" height="2" fill="#fff"/><rect x="7" y="4" width="2" height="2" fill="#fff"/><rect x="10" y="4" width="2" height="2" fill="#fff"/><rect x="1" y="7" width="2" height="2" fill="#fff"/><rect x="4" y="7" width="2" height="2" fill="#fff"/><rect x="7" y="7" width="2" height="2" fill="#fff"/><rect x="10" y="7" width="2" height="2" fill="#fff"/><rect x="1" y="10" width="2" height="2" fill="#fff"/><rect x="4" y="10" width="2" height="2" fill="#fff"/><rect x="7" y="10" width="2" height="2" fill="#fff"/><rect x="10" y="10" width="2" height="2" fill="#fff"/></svg><rect x="6" y="5" width="8" height="9" rx="1" fill="#e8c27e"/><rect x="7" y="6" width="4" height="1" fill="#fff"/><rect x="7" y="9" width="4" height="1" fill="#fff"/><rect x="7" y="12" width="4" height="1" fill="#fff"/></svg>
<svg class="a" style="left:365px;top:449px" width="13" height="13" viewBox="0 0 13 13" shape-rendering="crispEdges"><svg x="0" y="0" width="13" height="13" viewBox="0 0 13 13" shape-rendering="crispEdges"><rect x="0" y="0" width="1" height="13" fill="#8c8270"/><rect x="0" y="0" width="13" height="1" fill="#8c8270"/><rect x="3" y="0" width="1" height="13" fill="#8c8270"/><rect x="0" y="3" width="13" height="1" fill="#8c8270"/><rect x="6" y="0" width="1" height="13" fill="#8c8270"/><rect x="0" y="6" width="13" height="1" fill="#8c8270"/><rect x="9" y="0" width="1" height="13" fill="#8c8270"/><rect x="0" y="9" width="13" height="1" fill="#8c8270"/><rect x="12" y="0" width="1" height="13" fill="#8c8270"/><rect x="0" y="12" width="13" height="1" fill="#8c8270"/><rect x="1" y="1" width="2" height="2" fill="#8c8270"/></svg><rect x="7" y="4" width="2" height="2" fill="#f0903a"/></svg>
<svg class="a" style="left:586px;top:455px" width="14" height="21" viewBox="0 0 14 21"><path d="M0.5 0.5 L0.5 16.5 L4.5 12.5 L7.5 19 L10 18 L7 11.5 L11.5 11.5 Z" fill="#fff" stroke="#000" stroke-width="1" stroke-linejoin="miter"/></svg>
</body></html>
